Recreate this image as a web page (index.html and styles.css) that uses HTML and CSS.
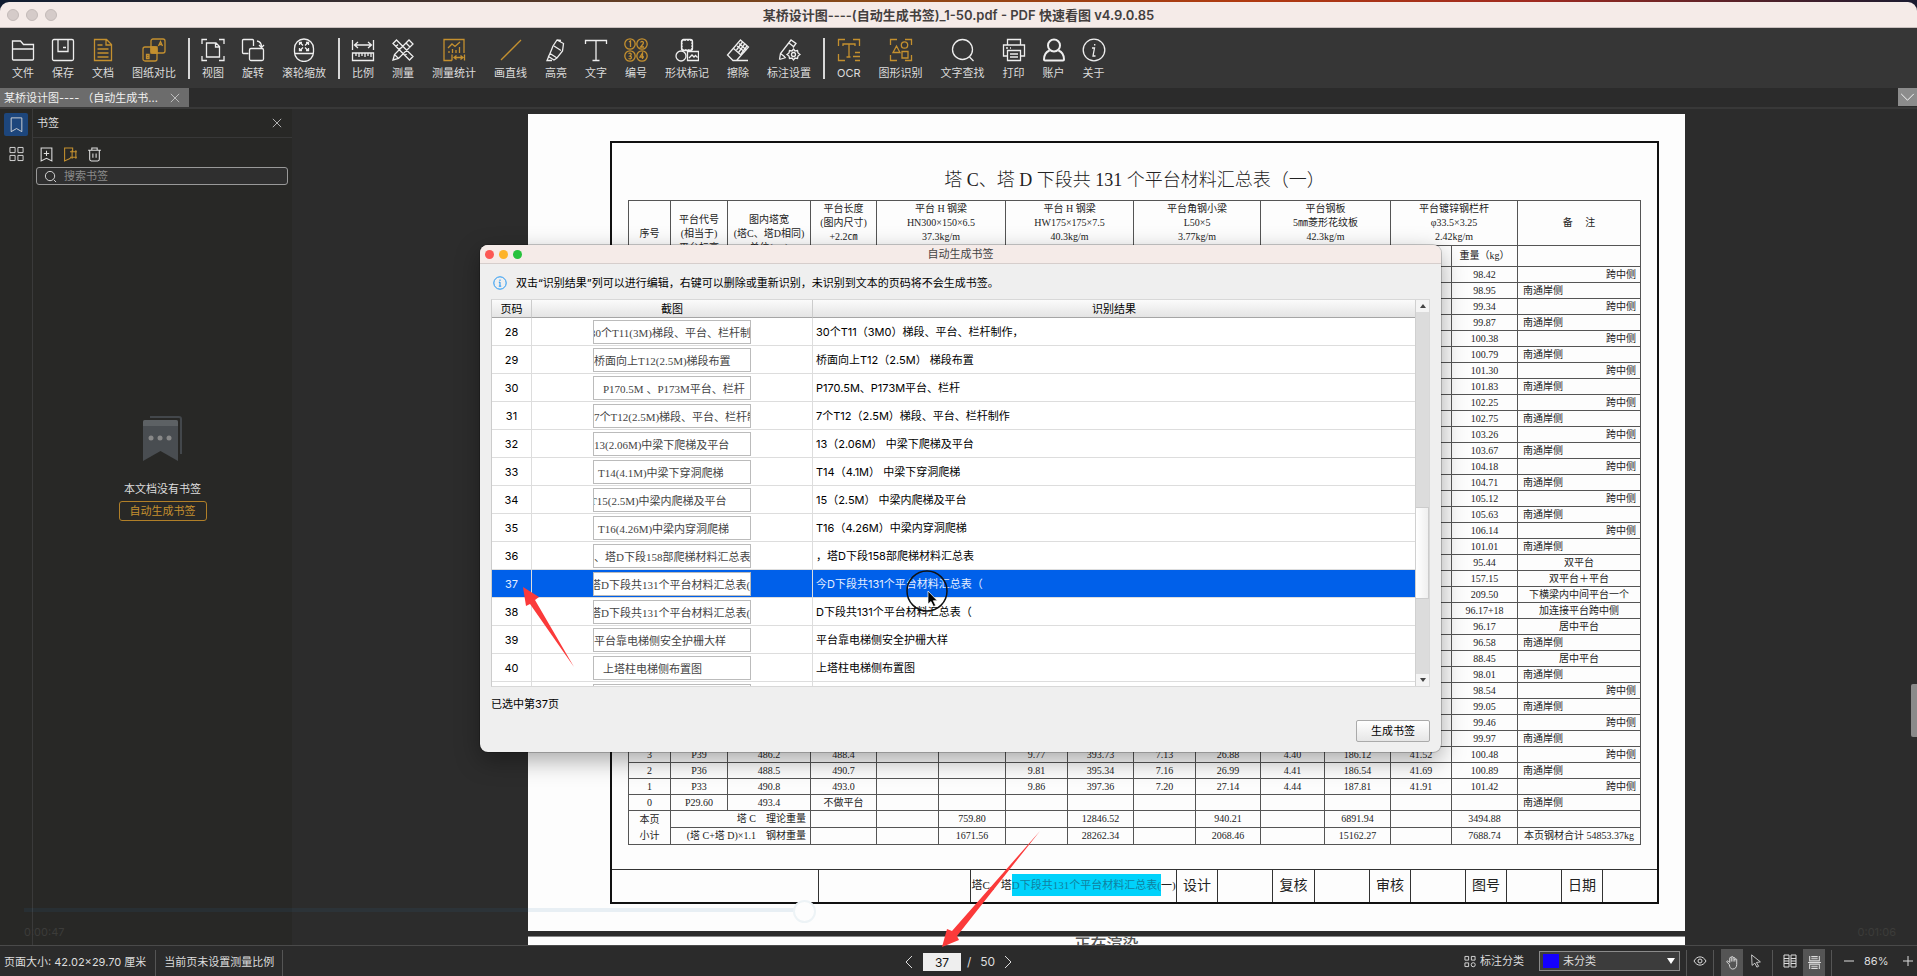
FILE: index.html
```html
<!DOCTYPE html>
<html lang="zh-CN">
<head>
<meta charset="utf-8">
<title>PDF 快速看图</title>
<link rel="stylesheet" href="styles.css">
</head>
<body>
<div class="app">
  <header class="titlebar">
    <span class="lights"><i></i><i></i><i></i></span>
    <h1>某桥设计图----(自动生成书签)_1-50.pdf - PDF 快速看图 v4.9.0.85</h1>
  </header>

  <nav class="toolbar">
    <button class="tool"><svg viewBox="0 0 24 24"><path d="M1.500 21V3h8l3 3.500h10V21a1 1 0 0 1-1 1h-19a1 1 0 0 1-1-1zM1.500 11h21"/></svg>文件</button>
    <button class="tool"><svg viewBox="0 0 24 24"><rect x="1.500" y="1.500" width="21" height="21" rx="1.500"/><path d="M7 1.500v12h10v-12M12 9.500h3"/></svg>保存</button>
    <button class="tool gold"><svg viewBox="0 0 24 24"><path d="M3.500 1.500h12l5 5v16h-17zM15 1.500V7h5.500M6.500 7h5M6.500 11h11M6.500 15h11M6.500 19h11"/></svg>文档</button>
    <button class="tool gold"><svg viewBox="0 0 24 24"><rect x="9" y="1" width="14" height="14" rx="2"/><rect x="1" y="9" width="14" height="14" rx="2"/><path class="fill" d="M9 9h6v6H9z"/><path d="M16.500 8l2-4.500 2 4.500M17 6.500h3M4.500 16.500v4H7v-4zM4.500 18.500H7"/></svg>图纸对比</button>
    <span class="sep"></span>
    <button class="tool"><svg viewBox="0 0 24 24"><path d="M1 6V1.500h5M18 1.500h5V6M1 18v4.500h5M18 22.500h5V18M5.500 5h9.500l3.500 3.500V19h-13zM14.500 5v4h4"/></svg>视图</button>
    <button class="tool"><svg viewBox="0 0 24 24"><path d="M7.500 15.500H2.500a1 1 0 0 1-1-1v-12a1 1 0 0 1 1-1h9a1 1 0 0 1 1 1v5.500M16 3c3 .5 4.500 2.500 4.500 6M18 7l2.500 2.500L23 7"/><rect x="8.500" y="10.500" width="14" height="12" rx="1.500"/></svg>旋转</button>
    <button class="tool"><svg viewBox="0 0 24 24"><rect x="2.500" y="1" width="19" height="22.500" rx="9.500"/><path d="M2.500 15.500h19M8 4.500l3 3M16 4.500l-3 3M8 12.500l3-3M16 12.500l-3-3M7.500 7V4.500H10M14 4.500h2.500V7M7.500 10v2.500H10M14 12.500h2.500V10"/></svg>滚轮缩放</button>
    <span class="sep"></span>
    <button class="tool"><svg viewBox="0 0 24 24"><path d="M1.500 2v10M22.500 2v10M3.500 7h17M7 4L3.500 7 7 10M17 4l3.500 3L17 10M1.500 15h21v7.500h-21zM5 15v3M8 15v4M11 15v3M14 15v4M17 15v3M20 15v4"/></svg>比例</button>
    <button class="tool"><svg viewBox="0 0 24 24"><path d="M2 5.500L5.500 2 22 18.500 18.500 22zM5 8.500l2-2M8 11.500l1.500-1.500M14 17.500l1.500-1.500M2 22l1.500-5.500L18 2l4 4L7.500 20.500zM15 5l4 4M3.500 16.500l4 4"/></svg>测量</button>
    <button class="tool gold"><svg viewBox="0 0 24 24"><path d="M10 22.500H2v-21h20V15M6 10l4-4 3 2.500 5-4.500M7 15v-2M10.500 15v-4M14 15v-3M17.500 15V9M10 16.500v6M22.500 16.500v6M12 19.500h9M14.500 17.500l-2.500 2 2.500 2M18.500 17.500l2.500 2-2.500 2"/></svg>测量统计</button>
    <button class="tool gold"><svg viewBox="0 0 24 24"><path d="M2 22L22 2"/></svg>画直线</button>
    <button class="tool"><svg viewBox="0 0 24 24"><path d="M13 2l6.500 3.500-1 7.500-5.500 7-7-4.500L9 8zM13 2l4 .5M6 15.500L4.500 18.500l5.500 3.500 3-2M4.500 19L3 22.500h5M10 8l7 4.500"/></svg>高亮</button>
    <button class="tool"><svg viewBox="0 0 24 24"><path d="M1.500 6V2.500h21V6M12 2.500v19.500M8.500 22.500h7"/></svg>文字</button>
    <button class="tool gold"><svg viewBox="0 0 24 24"><circle cx="6" cy="6" r="5.200"/><circle cx="18" cy="6" r="5.200"/><circle cx="6" cy="18" r="5.200"/><circle cx="18" cy="18" r="5.200"/><path d="M5 4l1.500-1V9M16.500 4.500c1-2 4-1 2.500 1.500L16.500 9h3.500M4.500 15.500c2-1.500 4 1 1.500 2.500 2.500.5 1.500 4-1.500 2.500M18.500 21v-6L16 19h4"/></svg>编号</button>
    <button class="tool"><svg viewBox="0 0 24 24"><rect x="7" y="2" width="10" height="10" rx="2" stroke-dasharray="2 1"/><rect x="6.500" y="1.500" width="11" height="11" rx="2"/><circle cx="6" cy="18" r="5"/><path d="M12.500 13.500h11v9h-11zM14 20l3-3 2 2 1.500-1.500 2 2"/></svg>形状标记</button>
    <button class="tool"><svg viewBox="0 0 24 24"><path d="M14.500 2l8 7L10.500 22.500H7L1.500 17zM7 10l8.500 7.500M8 22.500h14"/><path d="M11 8l8 6M13 5.500l7.500 6.500M19 5.500l-6.500 9M16.500 4l-6 8M21 8l-6 8"/></svg>擦除</button>
    <button class="tool"><svg viewBox="0 0 24 24"><path d="M2.500 21.500l1-6L14 2l5 3.500-3 4M3.500 15.500L8 19M2.500 21.500L9 19.500M12 5l4.500 3.500"/><path d="M16.500 11l1.500 2 2.500-.5.500 2.500 2 1.500-2 1.500-.5 2.500-2.500-.5-1.500 2-1.500-2-2.500.5-.5-2.500-2-1.500 2-1.500.5-2.500 2.500.5z"/><circle cx="16.500" cy="16.500" r="2"/></svg>标注设置</button>
    <span class="sep"></span>
    <button class="tool gold"><svg viewBox="0 0 24 24"><path d="M1.500 8V1.500H8M16 1.500h6.500V8M1.500 16v6.500H8M6 8V6h12v2M12 6v13M9.500 19h4M18 14.500h5M16 18.500h7M18 22.500h5"/></svg>OCR</button>
    <button class="tool gold"><svg viewBox="0 0 24 24"><path d="M1.500 7V1.500H8M16 1.500h6.500V7M1.500 17v5.500H8M16 22.500h6.500V17M7.500 8L4 14.500h7zM13 13.500h6v6.500h-6z"/><circle cx="15.500" cy="7" r="3.200"/></svg>图形识别</button>
    <button class="tool"><svg viewBox="0 0 24 24"><circle cx="11.500" cy="11.500" r="10"/><path d="M18.500 19l4 4"/></svg>文字查找</button>
    <button class="tool"><svg viewBox="0 0 24 24"><path d="M5.500 7V1.500h13V7M5.500 18h-4V7h21v11h-4M5.500 12.500h13v10h-13zM8 16h8M8 19h8M4 10h2M8 10h1"/></svg>打印</button>
    <button class="tool bold"><svg viewBox="0 0 24 24"><circle cx="12" cy="7.500" r="6"/><path d="M7.500 12.500C4 14 2 17 2 21.500q0 1 1 1h18q1 0 1-1C22 17 20 14 16.500 12.500"/></svg>账户</button>
    <button class="tool"><svg viewBox="0 0 24 24"><circle cx="12" cy="12" r="10.800"/><path d="M10 10h2.500L11 18h2.500M12.700 6v1.500"/></svg>关于</button>
  </nav>

  <div class="tabs">
    <div class="tab"><span>某桥设计图---- （自动生成书...</span><button class="x" aria-label="关闭标签"><svg viewBox="0 0 12 12"><path d="M1 1l10 10M11 1L1 11"/></svg></button></div>
    <button class="drop" aria-label="展开"><svg viewBox="0 0 16 10"><path d="M1 1l7 7 7-7"/></svg></button>
  </div>

  <main class="main">
    <nav class="rail">
      <button class="active" aria-label="书签"><svg viewBox="0 0 16 18"><path d="M2 1h12v15.500L8 13l-6 3.500z"/></svg></button>
      <button aria-label="缩略图"><svg viewBox="0 0 16 16"><path d="M1 1h5.500v5.500H1zM9.500 1H15v5.500H9.500zM1 9.500h5.500V15H1zM9.500 9.500H15V15H9.500z"/></svg></button>
    </nav>
    <aside class="side">
      <div class="side-head"><h2>书签</h2><button class="x" aria-label="关闭"><svg viewBox="0 0 12 12"><path d="M1 1l10 10M11 1L1 11"/></svg></button></div>
      <div class="side-tools">
        <button aria-label="添加书签"><svg viewBox="0 0 14 14"><path d="M2 1h10v12l-5-2.500L2 13zM7 3.500v5M4.500 6h5"/></svg></button>
        <button class="gold" aria-label="自动书签"><svg viewBox="0 0 14 14"><path d="M7 10.500L1.500 13V1H9v3M6.500 4.500H13M6.500 9.500H13M8.500 3v8M12 3v8"/></svg></button>
        <button aria-label="删除书签"><svg viewBox="0 0 14 14"><path d="M1 3h12M4.500 3V1h5v2M2.500 3v8.500a1.500 1.500 0 0 0 1.500 1.500h6a1.500 1.500 0 0 0 1.500-1.500V3M5.500 6v4M8.500 6v4"/></svg></button>
      </div>
      <label class="search"><svg viewBox="0 0 14 14"><circle cx="6.500" cy="6.500" r="5"/><path d="M10.500 10.500L13 13"/></svg><input type="text" placeholder="搜索书签" aria-label="搜索书签"></label>
      <div class="empty">
        <svg viewBox="0 0 39 45"><path d="M7 1h29a2 2 0 0 1 2 2v35" fill="none" stroke="#43474b" stroke-width="2"/><path d="M0 6a2 2 0 0 1 2-2h31a2 2 0 0 1 2 2v39l-17.500-10L0 45z" fill="#494d51"/><path d="M0 6a2 2 0 0 1 2-2h31a2 2 0 0 1 2 2v4H0z" fill="#5d6164"/><circle cx="8" cy="22" r="2.500" fill="#888"/><circle cx="17" cy="22" r="2.500" fill="#888"/><circle cx="26" cy="22" r="2.500" fill="#888"/></svg>
        <p>本文档没有书签</p>
        <button>自动生成书签</button>
      </div>
    </aside>

    <section class="viewer">
      <article class="paper">
        <div class="frame">
          <div class="sheet">
            <h2>塔 C、塔 D 下段共 131 个平台材料汇总表（一）</h2>
            <table class="bom">
              <colgroup><col class="c42"><col class="c57"><col class="c83"><col class="c66"><col class="c62"><col class="c67"><col class="c62"><col class="c66"><col class="c62"><col class="c65"><col class="c64"><col class="c66"><col class="c61"><col class="c66"><col class="c123"></colgroup>
              <thead>
                <tr class="h1"><th rowspan="2">序号</th><th rowspan="2">平台代号<br>(相当于)<br>平台标高</th><th rowspan="2">图内塔宽<br>(塔C、塔D相同)<br>单位(cm)</th><th>平台长度<br>(图内尺寸)<br>+2.2㎝</th><th colspan="2">平台 H 钢梁<br>HN300×150×6.5<br>37.3kg/m</th><th colspan="2">平台 H 钢梁<br>HW175×175×7.5<br>40.3kg/m</th><th colspan="2">平台角钢小梁<br>L50×5<br>3.77kg/m</th><th colspan="2">平台钢板<br>5㎜菱形花纹板<br>42.3kg/m</th><th colspan="2">平台镀锌钢栏杆<br>φ33.5×3.25<br>2.42kg/m</th><th>备　 注</th></tr>
                <tr class="h2"><th></th><th></th><th></th><th></th><th></th><th></th><th></th><th></th><th></th><th></th><th>重量（kg）</th><th></th></tr>
              </thead>
              <tbody>
                <tr><td colspan="13"></td><td>98.42</td><td class="r">跨中侧</td></tr>
                <tr><td colspan="13"></td><td>98.95</td><td class="l">南通岸侧</td></tr>
                <tr><td colspan="13"></td><td>99.34</td><td class="r">跨中侧</td></tr>
                <tr><td colspan="13"></td><td>99.87</td><td class="l">南通岸侧</td></tr>
                <tr><td colspan="13"></td><td>100.38</td><td class="r">跨中侧</td></tr>
                <tr><td colspan="13"></td><td>100.79</td><td class="l">南通岸侧</td></tr>
                <tr><td colspan="13"></td><td>101.30</td><td class="r">跨中侧</td></tr>
                <tr><td colspan="13"></td><td>101.83</td><td class="l">南通岸侧</td></tr>
                <tr><td colspan="13"></td><td>102.25</td><td class="r">跨中侧</td></tr>
                <tr><td colspan="13"></td><td>102.75</td><td class="l">南通岸侧</td></tr>
                <tr><td colspan="13"></td><td>103.26</td><td class="r">跨中侧</td></tr>
                <tr><td colspan="13"></td><td>103.67</td><td class="l">南通岸侧</td></tr>
                <tr><td colspan="13"></td><td>104.18</td><td class="r">跨中侧</td></tr>
                <tr><td colspan="13"></td><td>104.71</td><td class="l">南通岸侧</td></tr>
                <tr><td colspan="13"></td><td>105.12</td><td class="r">跨中侧</td></tr>
                <tr><td colspan="13"></td><td>105.63</td><td class="l">南通岸侧</td></tr>
                <tr><td colspan="13"></td><td>106.14</td><td class="r">跨中侧</td></tr>
                <tr><td colspan="13"></td><td>101.01</td><td class="l">南通岸侧</td></tr>
                <tr><td colspan="13"></td><td>95.44</td><td>双平台</td></tr>
                <tr><td colspan="13"></td><td>157.15</td><td>双平台＋平台</td></tr>
                <tr><td colspan="13"></td><td>209.50</td><td>下横梁内中间平台一个</td></tr>
                <tr><td colspan="13"></td><td>96.17+18</td><td>加连接平台跨中侧</td></tr>
                <tr><td colspan="13"></td><td>96.17</td><td>居中平台</td></tr>
                <tr><td colspan="13"></td><td>96.58</td><td class="l">南通岸侧</td></tr>
                <tr><td colspan="13"></td><td>88.45</td><td>居中平台</td></tr>
                <tr><td colspan="13"></td><td>98.01</td><td class="l">南通岸侧</td></tr>
                <tr><td colspan="13"></td><td>98.54</td><td class="r">跨中侧</td></tr>
                <tr><td colspan="13"></td><td>99.05</td><td class="l">南通岸侧</td></tr>
                <tr><td colspan="13"></td><td>99.46</td><td class="r">跨中侧</td></tr>
                <tr><td colspan="13"></td><td>99.97</td><td class="l">南通岸侧</td></tr>
                <tr><td>3</td><td>P39</td><td>486.2</td><td>488.4</td><td></td><td></td><td>9.77</td><td>393.73</td><td>7.13</td><td>26.88</td><td>4.40</td><td>186.12</td><td>41.52</td><td>100.48</td><td class="r">跨中侧</td></tr>
                <tr><td>2</td><td>P36</td><td>488.5</td><td>490.7</td><td></td><td></td><td>9.81</td><td>395.34</td><td>7.16</td><td>26.99</td><td>4.41</td><td>186.54</td><td>41.69</td><td>100.89</td><td class="l">南通岸侧</td></tr>
                <tr><td>1</td><td>P33</td><td>490.8</td><td>493.0</td><td></td><td></td><td>9.86</td><td>397.36</td><td>7.20</td><td>27.14</td><td>4.44</td><td>187.81</td><td>41.91</td><td>101.42</td><td class="r">跨中侧</td></tr>
                <tr><td>0</td><td>P29.60</td><td>493.4</td><td>不做平台</td><td></td><td></td><td></td><td></td><td></td><td></td><td></td><td></td><td></td><td></td><td class="l">南通岸侧</td></tr>
              </tbody>
              <tfoot>
                <tr><td rowspan="2" class="sum">本页<br>小计</td><td colspan="2" class="r">塔 C　理论重量</td><td></td><td></td><td>759.80</td><td></td><td>12846.52</td><td></td><td>940.21</td><td></td><td>6891.94</td><td></td><td>3494.88</td><td></td></tr>
                <tr><td colspan="2" class="r">(塔 C+塔 D)×1.1　钢材重量</td><td></td><td></td><td>1671.56</td><td></td><td>28262.34</td><td></td><td>2068.46</td><td></td><td>15162.27</td><td></td><td>7688.74</td><td>本页钢材合计 54853.37kg</td></tr>
              </tfoot>
            </table>
          </div>
          <div class="stamp">
            <span></span><span></span><span class="name">塔C、塔<mark>D下段共131个平台材料汇总表(</mark>一)</span><span>设计</span><span></span><span>复核</span><span></span><span>审核</span><span></span><span>图号</span><span></span><span>日期</span><span></span>
          </div>
        </div>
      </article>
      <article class="paper next">正在渲染</article>
      <i class="vthumb"></i>
    </section>
  </main>

  <footer class="status">
    <span class="cell first">页面大小: 42.02×29.70 厘米</span>
    <span class="cell">当前页未设置测量比例</span>
    <div class="pager">
      <button aria-label="上一页"><svg viewBox="0 0 8 14"><path d="M7 1L1 7l6 6"/></svg></button>
      <input type="text" value="37" aria-label="页码"><span>/</span><span class="total">50</span>
      <button aria-label="下一页"><svg viewBox="0 0 8 14"><path d="M1 1l6 6-6 6"/></svg></button>
    </div>
    <div class="right">
      <label class="cat" for="cat"><svg viewBox="0 0 13 13"><path d="M1 1h4v4H1zM8 1h4v4H8zM1 8h4v4H1z"/><circle cx="10" cy="10" r="2.200"/></svg>标注分类</label>
      <span class="picker"><i></i><select id="cat"><option>未分类</option></select><b></b></span>
      <span class="vs"></span>
      <button class="ib eye" aria-label="显示"><svg viewBox="0 0 14 14"><path d="M1 7c3-5.500 9-5.500 12 0-3 5.500-9 5.500-12 0z"/><circle cx="7" cy="7" r="2"/></svg></button>
      <span class="vs"></span>
      <button class="ib on hand" aria-label="拖动"><svg viewBox="0 0 16 16"><path d="M4.500 10L2 7.500c-.5-1 .8-1.700 1.500-1L5 8V3.500c0-1.300 1.700-1.300 1.700 0V2.500c0-1.300 1.900-1.300 1.900 0v1c0-1.300 1.900-1.300 1.900 0V5c0-1.300 2-1.300 2 0v5c0 3-1.500 5-4.500 5-2 0-3-2-3.500-5zM6.700 3.500V7M8.600 3.500V7M10.500 4V7"/></svg></button>
      <button class="ib arrow" aria-label="选择"><svg viewBox="0 0 14 16"><path d="M2 1l10 8-4.500.7L10 14l-2 1-2.300-4.500L2.500 13z"/></svg></button>
      <span class="vs"></span>
      <button class="ib two" aria-label="双页"><svg viewBox="0 0 14 14"><path d="M1 1h5v12H1zM8 1h5v12H8zM1 4.500h5M1 7h5M1 9.500h5M8 4.500h5M8 7h5M8 9.500h5"/></svg></button>
      <button class="ib on cont" aria-label="连续"><svg viewBox="0 0 14 14"><path d="M2.500 1v4.500h9V1M4 1.500h6M4 3.500h6M1 7h12M2.500 13V8.500h9V13M4 10.500h6M4 12.500h6"/></svg></button>
      <span class="vs"></span>
      <button class="ib zoom" aria-label="缩小"><svg viewBox="0 0 10 10"><path d="M0 5h10"/></svg></button>
      <span class="pct">86%</span>
      <button class="ib zoom" aria-label="放大"><svg viewBox="0 0 10 10"><path d="M0 5h10M5 0v10"/></svg></button>
    </div>
  </footer>
</div>

<div class="player" aria-hidden="true"><i></i><div><span>0:00:47</span><span>0:01:06</span></div></div>

<div class="dialog" role="dialog" aria-labelledby="dt">
  <div class="dbar"><span class="lights"><i></i><i></i><i></i></span><h2 id="dt">自动生成书签</h2></div>
  <p class="tip"><svg viewBox="0 0 14 14"><circle cx="7" cy="7" r="6.200"/><path d="M7 6v4M7 3.500V5M5.800 6.200H7M5.800 10.200h2.400"/></svg>双击“识别结果”列可以进行编辑，右键可以删除或重新识别，未识别到文本的页码将不会生成书签。</p>
  <div class="list">
    <div class="scroll">
    <table>
      <colgroup><col class="p"><col class="s"><col></colgroup>
      <thead><tr><th>页码</th><th>截图</th><th>识别结果</th></tr></thead>
      <tbody>
        <tr><td>28</td><td><div class="shot cut">30个T11(3M)梯段、平台、栏杆制作表</div></td><td>30个T11（3M0）梯段、平台、栏杆制作，</td></tr>
        <tr><td>29</td><td><div class="shot">桥面向上T12(2.5M)梯段布置</div></td><td>桥面向上T12（2.5M） 梯段布置</td></tr>
        <tr><td>30</td><td><div class="shot in">P170.5M 、P173M平台、栏杆</div></td><td>P170.5M、P173M平台、栏杆</td></tr>
        <tr><td>31</td><td><div class="shot">7个T12(2.5M)梯段、平台、栏杆制作</div></td><td>7个T12（2.5M）梯段、平台、栏杆制作</td></tr>
        <tr><td>32</td><td><div class="shot">13(2.06M)中梁下爬梯及平台</div></td><td>13（2.06M） 中梁下爬梯及平台</td></tr>
        <tr><td>33</td><td><div class="shot pad">T14(4.1M)中梁下穿洞爬梯</div></td><td>T14（4.1M） 中梁下穿洞爬梯</td></tr>
        <tr><td>34</td><td><div class="shot cut">T15(2.5M)中梁内爬梯及平台</div></td><td>15（2.5M） 中梁内爬梯及平台</td></tr>
        <tr><td>35</td><td><div class="shot pad">T16(4.26M)中梁内穿洞爬梯</div></td><td>T16（4.26M）中梁内穿洞爬梯</td></tr>
        <tr><td>36</td><td><div class="shot">、塔D下段158部爬梯材料汇总表</div></td><td>，塔D下段158部爬梯材料汇总表</td></tr>
        <tr class="sel"><td>37</td><td><div class="shot cut">塔D下段共131个平台材料汇总表(一</div></td><td>今D下段共131个平台材料汇总表（</td></tr>
        <tr><td>38</td><td><div class="shot cut">塔D下段共131个平台材料汇总表(二</div></td><td>D下段共131个平台材料汇总表（</td></tr>
        <tr><td>39</td><td><div class="shot">平台靠电梯侧安全护栅大样</div></td><td>平台靠电梯侧安全护栅大样</td></tr>
        <tr><td>40</td><td><div class="shot in">上塔柱电梯侧布置图</div></td><td>上塔柱电梯侧布置图</td></tr>
        <tr><td></td><td><div class="shot"></div></td><td></td></tr>
      </tbody>
    </table>
    </div>
    <div class="bar"><span class="up"></span><div class="track"><i></i></div><span class="down"></span></div>
  </div>
  <p class="state">已选中第37页</p>
  <div class="actions"><button>生成书签</button></div>
</div>

<svg class="marks" aria-hidden="true">
  <path fill="#fb3a3a" d="M523 587l16 10-4 3 39 67-44-63-4 2zM942 947l5-18 5 2 88-100-83 105 2 4z"/>
  <circle cx="927" cy="591" r="20" fill="none" stroke="#111" stroke-width="1.500"/>
  <path d="M928 591v13l3-2.500 2.500 5 2.200-1-2.400-4.800h4z" fill="#000" stroke="#fff" stroke-width=".7"/>
</svg>
</body>
</html>
```
FILE: styles.css
```css
* { box-sizing: border-box; }
html, body { height: 100%; }
body {
  margin: 0;
  overflow: hidden;
  position: relative;
  background: linear-gradient(90deg, #101c30 0, #3c3030 20%, #8a4a18 45%, #b03a10 65%, #a02a20 80%, #1a1a30 100%);
  font: 11px/16px Inter, "Noto Sans CJK SC", sans-serif;
  color: #ddd;
}
h1, h2, p { margin: 0; font-weight: 400; }
button, input, select { font: inherit; color: inherit; margin: 0; padding: 0; border: 0; background: none; }
svg { fill: none; stroke: currentColor; display: block; flex: none; }
.fill { fill: currentColor; }
.gold { color: #c4902f; }

.app { height: 100%; padding-top: 2px; display: flex; flex-direction: column; }

.titlebar {
  height: 26px;
  flex: none;
  position: relative;
  display: flex;
  align-items: center;
  justify-content: center;
  background: #f5ebe8;
  border-bottom: 1px solid #c9c0be;
  border-radius: 9px 9px 0 0;
  color: #443f3e;
}
.titlebar h1 { font-size: 13px; font-weight: 600; }
.lights { position: absolute; left: 7px; display: flex; gap: 7px; }
.lights i { width: 12px; height: 12px; border-radius: 50%; background: #d5cbc9; border: 1px solid #c3bab8; }

.toolbar { height: 60px; flex: none; display: flex; padding: 10px 3px 0; background: #363636; }
.tool { display: flex; flex-direction: column; align-items: center; gap: 3px; height: 42px; padding: 0 9px; white-space: nowrap; }
.tool svg { width: 24px; height: 24px; margin: 0 -1px; stroke-width: 1.3; color: #eee; }
.tool.gold { color: #ddd; }
.tool.gold svg { color: #c4902f; }
.tool.bold svg { stroke-width: 2; }
.sep { width: 2px; height: 41px; margin: 0 3px; background: #d8d8d8; flex: none; }

.tabs { height: 21px; flex: none; display: flex; justify-content: space-between; align-items: flex-start; background: #2b2b2b; border-bottom: 2px solid #383838; }
.tab { height: 19px; display: flex; align-items: center; gap: 10px; padding: 0 9px 0 4px; background: #6c6c6c; color: #f2f2f2; }
.tab span { width: 156px; white-space: nowrap; }
.x svg { width: 10px; height: 10px; stroke: #ccc; }
.drop { width: 19px; height: 18px; background: #8c8c8c; display: grid; place-items: center; }
.drop svg { width: 15px; height: 9px; color: #fff; }

.main { flex: 1; min-height: 0; display: flex; background: #2c2c2c; }
.rail { width: 33px; padding: 4px 0 0 4px; background: #282826; border-right: 1px solid #3a3a3a; display: flex; flex-direction: column; gap: 6px; }
.rail button { width: 24px; height: 23px; display: grid; place-items: center; border-radius: 2px; }
.rail .active { background: #1d467c; }
.rail svg { width: 15px; height: 16px; }
.side { width: 259px; background: #282826; display: flex; flex-direction: column; }
.side-head { height: 29px; display: flex; align-items: center; justify-content: space-between; padding: 0 10px 0 4px; border-bottom: 1px solid #383838; }
.side-head h2 { font-size: 11px; }
.side-tools { display: flex; gap: 9px; padding: 9px 6px 5px; }
.side-tools svg { width: 15px; height: 15px; }
.search { margin: 0 4px 0 3px; height: 18px; display: flex; align-items: center; gap: 7px; padding: 0 7px; border: 1px solid #999; border-radius: 3px; background: #2f2f2f; }
.search svg { width: 13px; height: 13px; }
.search input { flex: 1; min-width: 0; outline: 0; }
.search input::placeholder { color: #8a8a8a; }
.empty { display: flex; flex-direction: column; align-items: center; padding-top: 231px; }
.empty svg { width: 39px; height: 45px; stroke: none; }
.empty p { margin: 20px 0 4px; }
.empty button { height: 20px; padding: 0 10px; border: 1px solid #b07f28; border-radius: 3px; color: #c4902f; }

.viewer { flex: 1; min-width: 0; position: relative; overflow: hidden; display: flex; flex-direction: column; gap: 5px; padding: 5px 232px 0 236px; }
.paper { flex: none; padding: 27px 26px 27px 82px; background: #fdfdfd; color: #222; font: 400 10px/14px "Liberation Serif", "Noto Sans CJK SC", serif; }
.frame { border: 2px solid #111; }
.sheet { padding: 25px 16px 24px; }
.sheet h2 { font-size: 18px; line-height: 24px; margin-bottom: 8px; text-align: center; font-weight: 300; }
.bom { width: 100%; table-layout: fixed; border-collapse: collapse; border: 1px solid #333; }
.bom th, .bom td { border: 1px solid #555; padding: 0; text-align: center; font-weight: 400; white-space: nowrap; }
.bom td { height: 16px; line-height: 15px; }
.bom td.l { text-align: left; padding-left: 5px; }
.bom td.r { text-align: right; padding-right: 4px; }
.bom .h1 { height: 45px; }
.bom .h2 { height: 21px; }
.bom tfoot td { height: 17px; line-height: 16px; }
.c42 { width: 42px; } .c57 { width: 57px; } .c61 { width: 61px; } .c62 { width: 62px; }
.c64 { width: 64px; } .c65 { width: 65px; } .c66 { width: 66px; } .c67 { width: 67px; }
.c83 { width: 83px; } .c123 { width: 123px; }
.stamp { display: grid; grid-template-columns: 206fr 152fr 206fr 41fr 55fr 42fr 55fr 41fr 55fr 41fr 55fr 41fr 55fr; height: 33px; border-top: 1px solid #333; font-size: 14px; }
.stamp span { display: grid; place-items: center; border-left: 1px solid #333; white-space: nowrap; }
.stamp span:first-child { border-left: 0; }
.stamp .name { display: block; font-size: 11px; line-height: 31px; text-align: center; overflow: hidden; }
.stamp mark { background: #00d2fb; color: #1181a0; padding: 5px 0; }
.next { padding: 0; height: 30px; text-align: center; font: 500 16px/12px "Noto Sans CJK SC", sans-serif; color: #555; border-top: 1px solid #888; }
.vthumb { position: absolute; right: 0; top: 575px; width: 6px; height: 53px; border-radius: 2px 0 0 2px; background: #8a8a8a; }

.status { height: 31px; flex: none; position: relative; display: flex; align-items: center; background: #2b2b2b; border-top: 1px solid #4a4a4a; padding-right: 4px; }
.cell { height: 26px; align-self: flex-end; line-height: 24px; padding: 0 8px; border-right: 1px solid #555; white-space: nowrap; }
.cell.first { padding: 0 9px 0 4px; }
.pager { position: absolute; left: 905px; top: 6px; display: flex; align-items: center; gap: 6px; height: 20px; font-size: 12px; }
.pager svg { width: 8px; height: 14px; }
.pager input { width: 38px; height: 18px; margin-left: 4px; text-align: center; background: #eee; color: #111; }
.total { margin: 0 3px; }
.right { margin-left: auto; height: 100%; display: flex; align-items: center; }
.cat { display: flex; align-items: center; gap: 4px; margin-right: 15px; }
.cat svg { width: 12px; height: 13px; }
.picker { display: flex; align-items: center; width: 141px; height: 20px; padding: 0 4px 0 3px; border: 1px solid #8a8a8a; background: #3c3c3c; }
.picker i { width: 16px; height: 14px; background: #1400ff; margin-right: 4px; flex: none; }
.picker select { appearance: none; flex: 1; outline: 0; }
.picker b { border: 4px solid transparent; border-top: 6px solid #fff; border-bottom: 0; }
.vs { width: 1px; height: 26px; background: #555; margin: 4px 0 0 6px; }
.ib { display: grid; place-items: center; }
.ib svg { width: 14px; height: 14px; }
.eye { margin: 0 0 0 6px; }
.on { background: #555; width: 22px; height: 27px; margin-top: 3px; }
.on svg { width: 15px; height: 15px; }
.hand { margin-left: 7px; }
.arrow { margin: 0 3px 0 6px; }
.two { margin: 0 6px 0 10px; }
.zoom { margin-left: 12px; }
.zoom svg { width: 10px; height: 10px; }
.pct { margin-left: 10px; width: 25px; }
.pct + .zoom { margin-left: 14px; }

.player { position: absolute; left: 24px; right: 21px; bottom: 36px; color: #3c3c3a; font-size: 11px; pointer-events: none; }
.player > i { display: block; position: relative; width: 782px; height: 4px; margin-bottom: 12px; background: rgba(50, 120, 170, .1); }
.player > i::after { content: ""; position: absolute; right: -10px; top: -8px; width: 19px; height: 19px; border: 2px solid #edf3f6; border-radius: 50%; background: #fdfdfd; }
.player div { display: flex; justify-content: space-between; }

.dialog { position: absolute; left: 480px; top: 245px; width: 961px; background: #efefef; color: #000; border-radius: 8px; box-shadow: 0 0 0 1px rgba(0, 0, 0, .2), 0 8px 24px rgba(0, 0, 0, .35); overflow: hidden; }
.dbar { height: 19px; position: relative; display: flex; align-items: center; justify-content: center; background: #f5ebe8; border-bottom: 1px solid #d6cecc; color: #444; }
.dbar h2 { font-size: 11px; }
.dbar .lights { left: 5px; gap: 5px; }
.dbar .lights i { width: 9px; height: 9px; border: 0; background: #fc5753; }
.dbar .lights i:nth-child(2) { background: #fdb32a; }
.dbar .lights i:nth-child(3) { background: #27c23c; }
.tip { display: flex; align-items: center; gap: 9px; height: 35px; padding: 3px 13px 0; white-space: nowrap; }
.tip svg { width: 14px; height: 14px; color: #2196f3; }
.list { display: flex; height: 388px; margin: 0 11px; border: 1px solid #d8d8d8; border-left-color: #ccc; background: #fff; }
.scroll { flex: 1; overflow: hidden; }
.list table { width: 100%; table-layout: fixed; border-collapse: separate; border-spacing: 0; }
.p { width: 40px; } .s { width: 281px; }
.list th { height: 18px; padding: 0; font-weight: 400; background: linear-gradient(#fbfbfb, #e4e4e4); border-bottom: 1px solid #a5a5a5; border-right: 1px solid #ccc; line-height: 16px; }
.list td { height: 28px; padding: 0; border-bottom: 1px solid #ddd; border-right: 1px solid #ddd; white-space: nowrap; }
.list td:first-child { text-align: center; }
.list td:last-child { padding-left: 3px; border-right: 0; }
.list th:last-child { border-right: 0; }
.sel td { background: #0060ea; color: #e4eeff; }
.shot { width: 158px; height: 24px; margin: 0 auto; position: relative; overflow: hidden; border: 1px solid #bbb; background: #fff; color: #444; font: 400 11px/24px "Liberation Serif", "Noto Sans CJK SC", serif; }
.shot.cut { text-indent: -4px; }
.shot.pad { padding-left: 4px; }
.shot.in { padding-left: 9px; }
.bar { width: 14px; display: flex; flex-direction: column; background: #f4f4f4; border-left: 1px solid #d0d0d0; }
.up, .down { height: 12px; display: grid; place-items: center; }
.up::after, .down::after { content: ""; border: 3px solid transparent; border-top: 0; border-bottom: 4px solid #444; }
.down::after { border-bottom: 0; border-top: 4px solid #444; }
.track { flex: 1; background: #dcdcdc; padding-top: 195px; }
.track i { display: block; height: 92px; background: linear-gradient(90deg, #fff, #efefef); border: 1px solid #ccc; border-left: 0; }
.state { padding: 9px 11px 8px; }
.actions { display: flex; justify-content: flex-end; padding: 0 11px 10px; }
.actions button { height: 22px; padding: 0 14px; border: 1px solid #aaa; border-radius: 2px; background: linear-gradient(#fff, #e6e6e6); }

.marks { position: absolute; left: 0; top: 0; width: 100%; height: 100%; stroke: none; pointer-events: none; }
```
